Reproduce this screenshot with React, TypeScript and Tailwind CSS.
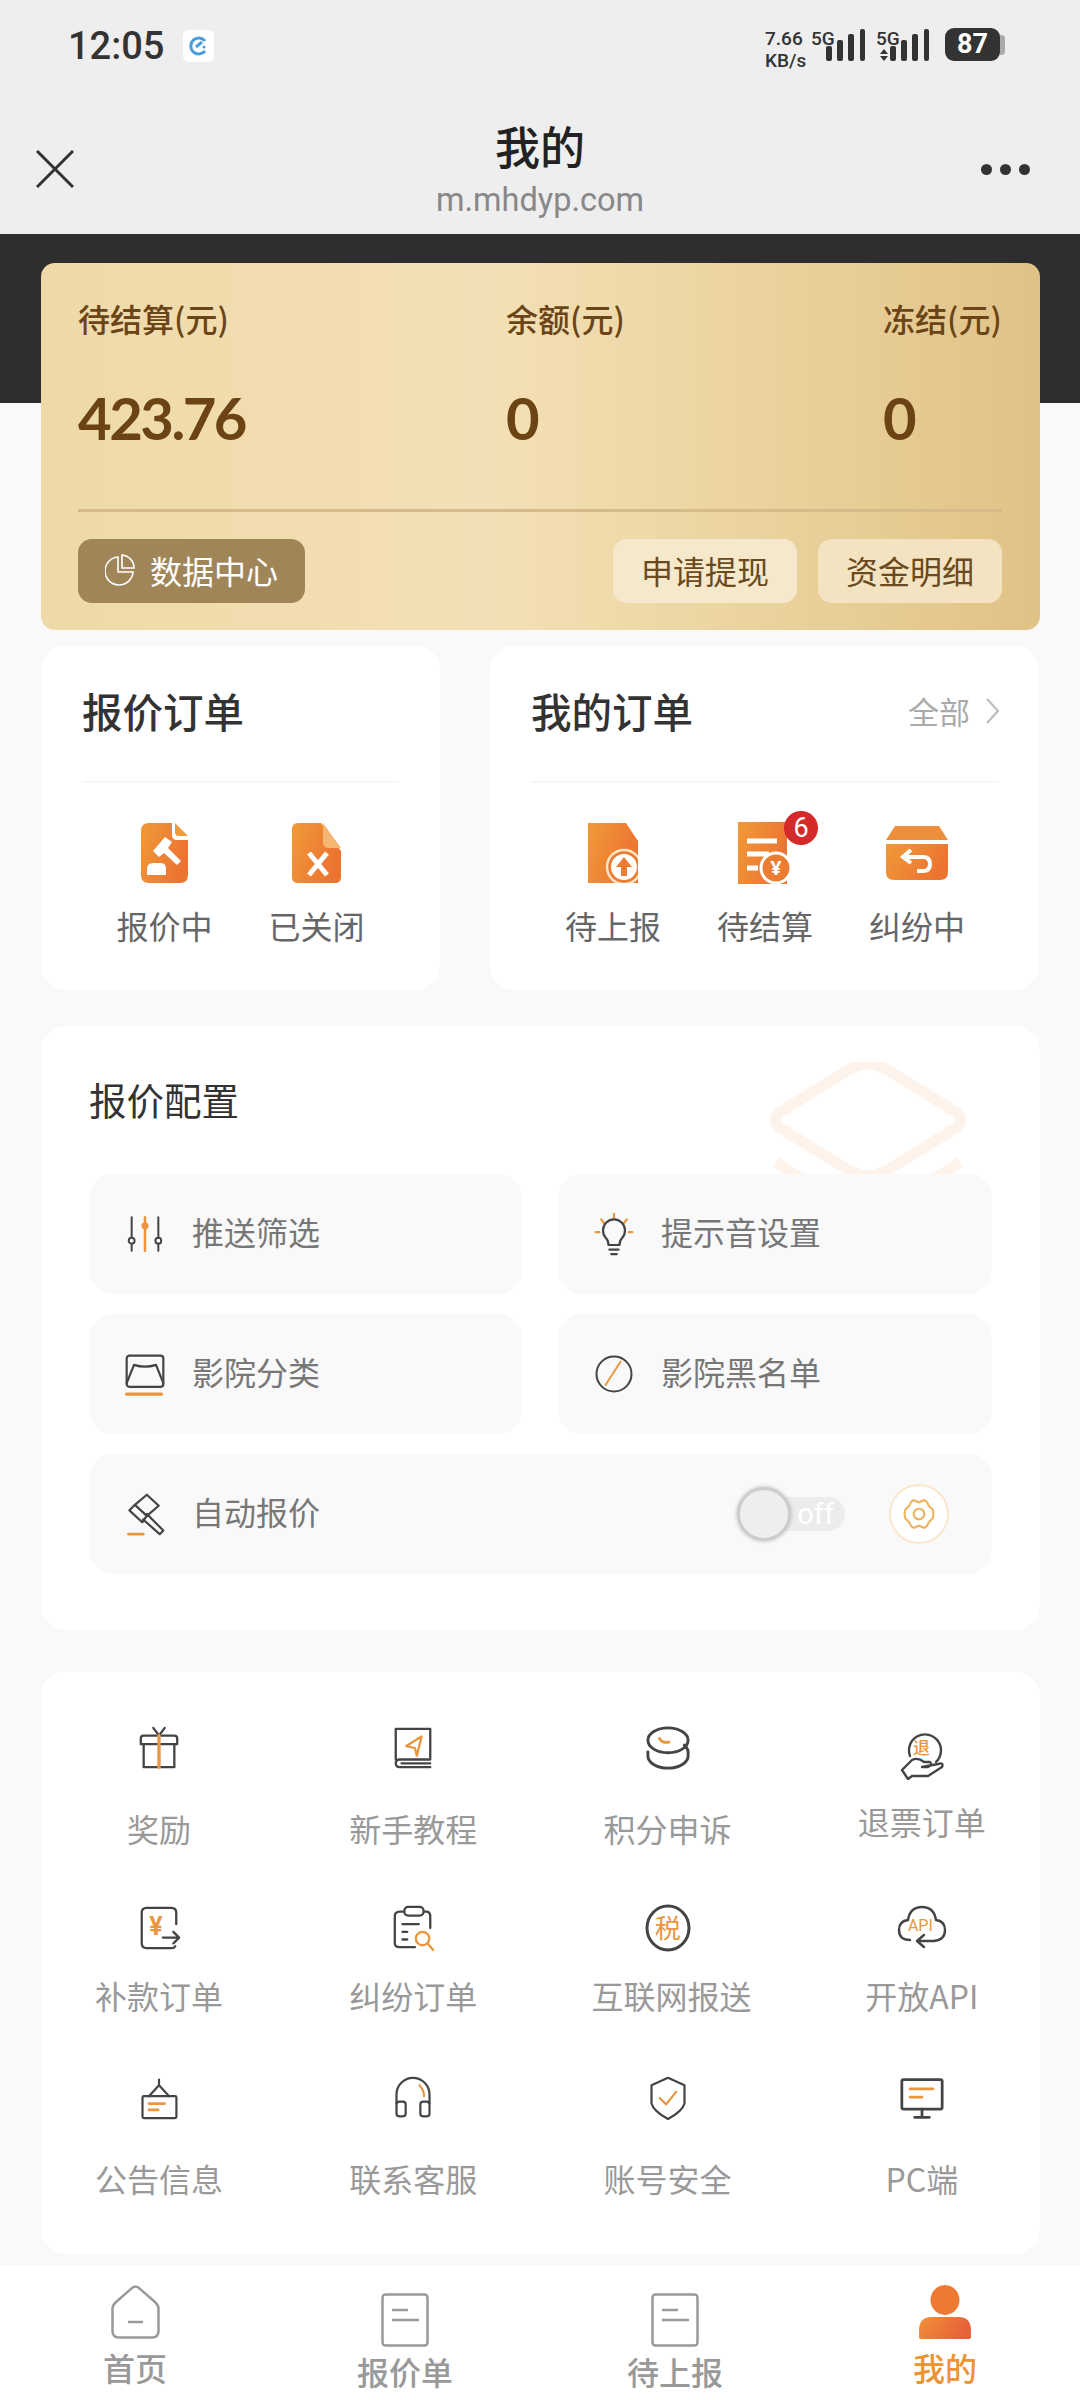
import React from "react";

const CJK = "font-['Noto_Sans_CJK_SC','Noto_Sans',sans-serif]";

const Gradient = ({ id }: { id: string }) => (
    <defs>
        <linearGradient id={id} x1="0" y1="0" x2="1" y2="0.4">
            <stop offset="0" stopColor="#f09a38" />
            <stop offset="1" stopColor="#ec7431" />
        </linearGradient>
    </defs>
);

const Bars = () => (
    <svg width="40" height="32" viewBox="0 0 40 32" fill="#333">
        <rect x="0" y="17" width="6" height="15" rx="2" />
        <rect x="11" y="11" width="6" height="21" rx="2" />
        <rect x="22" y="5" width="6" height="27" rx="2" />
        <rect x="34" y="0" width="5" height="32" rx="2" />
    </svg>
);

const StatusBar = () => (
    <div className="flex h-[90px] items-start justify-between pl-[68px] pr-[75px] pt-[28px] text-[#333]">
        <div className="flex items-center gap-[19px]">
            <span className="font-['Roboto',sans-serif] text-[38px] font-medium leading-[36px]">12:05</span>
            <div className="flex h-[32px] w-[31px] items-center justify-center rounded-[6px] bg-white">
                <svg width="20" height="20" viewBox="0 0 20 20" fill="none">
                    <path d="M16 5A8 8 0 1 0 16 15" stroke="#4b9ddb" strokeWidth="3" />
                    <path d="M7 11L13 6" stroke="#4b9ddb" strokeWidth="3" />
                    <circle cx="15" cy="11" r="1.5" fill="#4b9ddb" />
                </svg>
            </div>
        </div>
        <div className="flex items-start">
            <div className="flex w-[46px] flex-col font-['Roboto',sans-serif] text-[19px] font-medium leading-[22px]">
                <span>7.66</span>
                <span>KB/s</span>
            </div>
            <span className="w-[15px] font-['Roboto',sans-serif] text-[19px] font-medium leading-[22px]">5G</span>
            <div className="pt-[1px]"><Bars /></div>
            <div className="relative ml-[10px] w-[54px] font-['Roboto',sans-serif] text-[19px] font-medium leading-[22px]">
                <span>5G</span>
                <svg className="absolute left-[3px] top-[21px]" width="10" height="12" viewBox="0 0 10 12" fill="#333">
                    <path d="M5 0L9 5H1ZM5 12L1 7H9Z" />
                </svg>
            </div>
            <div className="-ml-[40px] mr-[15px] pt-[1px]"><Bars /></div>
            <div className="flex items-center">
                <div className="flex h-[33px] w-[55px] items-center justify-center rounded-[9px] bg-[#333] font-['Roboto',sans-serif] text-[27px] font-bold text-white">
                    87
                </div>
                <div className="h-[20px] w-[5px] rounded-r-[4px] bg-[#aaa]" />
            </div>
        </div>
    </div>
);

const TitleBar = () => (
    <div className="grid h-[144px] grid-cols-[1fr_auto_1fr] pl-[36px] pr-[50px] pt-[60px]">
        <svg width="38" height="38" viewBox="0 0 38 38" stroke="#333" strokeWidth="3" fill="none">
            <path d="M1 1L37 37M37 1L1 37" />
        </svg>
        <div className="-mt-[29px] flex translate-x-[7px] flex-col items-center">
            <span className={`${CJK} text-[45px] font-medium leading-[50px] text-[#222]`}>我的</span>
            <span className="mt-[10px] font-['Roboto',sans-serif] text-[32.5px] leading-[38px] text-[#888]">m.mhdyp.com</span>
        </div>
        <div className="flex h-[38px] items-center justify-end gap-[8px] pt-[1px]">
            <div className="h-[11px] w-[11px] rounded-full bg-[#333]" />
            <div className="h-[11px] w-[11px] rounded-full bg-[#333]" />
            <div className="h-[11px] w-[11px] rounded-full bg-[#333]" />
        </div>
    </div>
);

const Balance = ({ label, value }: { label: string; value: string }) => (
    <div className="flex flex-col">
        <span className={`${CJK} -mt-[2px] whitespace-nowrap text-[32px] font-medium leading-[40px] text-[#6b4517]`}>{label}</span>
        <span className="mt-[51px] font-['Lato',sans-serif] text-[58px] font-bold leading-[58px] tracking-[-2.5px] text-[#6b4314]">{value}</span>
    </div>
);

const GoldCard = () => (
    <div className="relative ml-[41px] mr-[40px] -mt-[140px] h-[367px] rounded-[14px] bg-[linear-gradient(90deg,#eed9a8_0%,#f4e0b6_45%,#ecd5a2_68%,#e0c286_100%)] pl-[37px] pr-[38px] pt-[37px]">
        <div className="flex">
            <div className="w-[428px]"><Balance label="待结算(元)" value="423.76" /></div>
            <div className="w-[377px]"><Balance label="余额(元)" value="0" /></div>
            <div className="w-[118px]"><Balance label="冻结(元)" value="0" /></div>
        </div>
        <div className="mt-[62px] h-[3px] bg-[#d5bb89]" />
        <div className="mt-[27px] flex items-center">
            <div className="flex h-[64px] w-[227px] items-center justify-center gap-[15px] rounded-[14px] bg-[#a08558] pb-[3px]">
                <svg width="30" height="32" viewBox="0 0 30 32" fill="none" stroke="#fff" strokeWidth="1.6">
                    <path d="M13 3A14 14 0 1 0 28 18H13Z" />
                    <path d="M17 1V14H29A13 13 0 0 0 17 1Z" />
                </svg>
                <span className={`${CJK} text-[32px] text-white`}>数据中心</span>
            </div>
            <div className={`${CJK} ml-auto flex h-[64px] w-[184px] items-center justify-center rounded-[14px] bg-[#f6e8cb] pb-[3px] text-[32px] text-[#6b4a20]`}>申请提现</div>
            <div className={`${CJK} ml-[21px] flex h-[64px] w-[184px] items-center justify-center rounded-[14px] bg-[#f3e3c0] pb-[3px] text-[32px] text-[#6b4a20]`}>资金明细</div>
        </div>
    </div>
);

const OrderItem = ({ label, children }: { label: string; children: React.ReactNode }) => (
    <div className="flex w-[152px] flex-col items-center">
        <div className="relative flex h-[64px] w-[80px] items-center justify-center">{children}</div>
        <span className={`${CJK} mt-[18px] text-[32px] leading-[44px] text-[#666]`}>{label}</span>
    </div>
);

const BidIcon = () => (
    <svg width="48" height="60" viewBox="0 0 48 60">
        <Gradient id="g1" />
        <path d="M8 0H31V12Q31 17 36 17H47V52Q47 60 39 60H8Q0 60 0 52V8Q0 0 8 0Z" fill="url(#g1)" />
        <path d="M34 0L47 13H38Q34 13 34 9Z" fill="#f09a38" />
        <path d="M24 14L31 19L27 25L40 38L36 42L23 30L18 34L12 28Z" fill="#fff" />
        <path d="M6 52V46Q6 40 12 40H20Q25 40 25 46V52Z" fill="#fff" />
    </svg>
);

const ClosedIcon = () => (
    <svg width="49" height="60" viewBox="0 0 49 60">
        <Gradient id="g2" />
        <path d="M6 0H29L49 28V54Q49 60 43 60H6Q0 60 0 54V6Q0 0 6 0Z" fill="url(#g2)" />
        <path d="M31 0L49 25H37Q31 25 31 19Z" fill="#f6b673" />
        <path d="M17 30L35 52M35 30L17 52" stroke="#fff" strokeWidth="5" />
    </svg>
);

const UploadIcon = () => (
    <svg width="50" height="60" viewBox="0 0 50 60">
        <Gradient id="g3" />
        <path d="M0 0H38L50 18V60H0Z" fill="url(#g3)" />
        <circle cx="36" cy="44" r="17" fill="#ec7c31" stroke="#fbe3c6" strokeWidth="2.5" />
        <circle cx="36" cy="44" r="13" fill="#fff" />
        <path d="M36 34L44 44H39V53H33V44H28Z" fill="#ec7c31" />
    </svg>
);

const SettleIcon = () => (
    <svg width="54" height="62" viewBox="0 0 54 62">
        <Gradient id="g4" />
        <path d="M0 0H49V62H0Z" fill="url(#g4)" />
        <path d="M9 19H39M9 32H31M9 46H20" stroke="#fff" strokeWidth="5" />
        <circle cx="38" cy="46" r="15" fill="#ec7c31" stroke="#fff" strokeWidth="3" />
        <text x="38" y="53" textAnchor="middle" fontSize="20" fill="#fff" fontWeight="700">¥</text>
    </svg>
);

const DisputeIcon = () => (
    <svg width="62" height="54" viewBox="0 0 62 54">
        <Gradient id="g5" />
        <path d="M9 0H53L62 14H0Z" fill="#ed8f3a" />
        <path d="M0 18H62V46Q62 54 54 54H8Q0 54 0 46Z" fill="url(#g5)" />
        <path d="M25 24L17 31L25 37M18 31H37Q44 31 44 38Q44 45 37 45H31" fill="none" stroke="#fff" strokeWidth="4" />
    </svg>
);

const Orders = () => (
    <div className="mt-[16px] flex h-[344px] gap-[50px] pl-[41px]">
        <div className="w-[399px] rounded-[24px] bg-white px-[41px] pt-[39px]">
            <span className={`${CJK} text-[40.5px] font-medium leading-[52px] text-[#333]`}>报价订单</span>
            <div className="mt-[44px] h-[2px] bg-[#f6f6f6]" />
            <div className="mt-[38px] flex justify-center">
                <OrderItem label="报价中"><BidIcon /></OrderItem>
                <OrderItem label="已关闭"><ClosedIcon /></OrderItem>
            </div>
        </div>
        <div className="w-[549px] rounded-[24px] bg-white pl-[41px] pr-[40px] pt-[39px]">
            <div className="flex items-center justify-between">
                <span className={`${CJK} text-[40.5px] font-medium leading-[52px] text-[#333]`}>我的订单</span>
                <div className="flex items-center gap-[16px]">
                    <span className={`${CJK} text-[31px] text-[#aaa]`}>全部</span>
                    <svg width="13" height="26" viewBox="0 0 13 26" fill="none" stroke="#bbb" strokeWidth="2">
                        <path d="M1 1L12 13L1 25" />
                    </svg>
                </div>
            </div>
            <div className="mt-[44px] h-[2px] bg-[#f6f6f6]" />
            <div className="mt-[38px] flex justify-center">
                <OrderItem label="待上报"><UploadIcon /></OrderItem>
                <OrderItem label="待结算">
                    <SettleIcon />
                    <div className="absolute -top-[10px] left-[59px] flex h-[34px] w-[34px] items-center justify-center rounded-full bg-[#d42a2a] font-['Roboto',sans-serif] text-[27px] leading-none text-white">6</div>
                </OrderItem>
                <OrderItem label="纠纷中"><DisputeIcon /></OrderItem>
            </div>
        </div>
    </div>
);

const DARK = "#444";
const ACCENT = "#e9963f";

const Svg = ({ size = 48, children }: { size?: number; children: React.ReactNode }) => (
    <svg width={size} height={size} viewBox="0 0 48 48" fill="none" stroke={DARK} strokeWidth="2.4" strokeLinecap="round" strokeLinejoin="round">
        {children}
    </svg>
);

const Tile = ({ label, icon, wide }: { label: string; icon: React.ReactNode; wide?: React.ReactNode }) => (
    <div className="flex h-[120px] items-center rounded-[24px] bg-[#f9f9f9] pl-[34px]">
        <div className="flex w-[44px] justify-center">{icon}</div>
        <span className={`${CJK} ml-[25px] pb-[6px] text-[32px] text-[#777]`}>{label}</span>
        {wide}
    </div>
);

const Config = () => (
    <div className="relative mt-[36px] ml-[41px] mr-[40px] h-[604px] overflow-hidden rounded-[24px] bg-white px-[48px] pt-[51px]">
        <svg className="absolute left-[727px] top-[36px]" width="200" height="120" viewBox="0 0 200 120" fill="none" stroke="#fdf3ea" strokeWidth="11">
            <path d="M84 6Q100 -2 116 6L188 50Q198 58 188 66L116 110Q100 118 84 110L12 66Q2 58 12 50Z" />
            <path d="M8 100L50 128M192 100L150 128" />
        </svg>
        <div className={`${CJK} relative text-[37.5px] leading-[44px] text-[#333]`}>报价配置</div>
        <div className="relative mt-[53px] grid grid-cols-[433px_434px] gap-x-[36px] gap-y-[20px]">
            <Tile label="推送筛选" icon={
                <Svg size={40}>
                    <path d="M8 4V44M40 4V44" />
                    <path d="M24 4V44" stroke={ACCENT} strokeWidth="3" />
                    <circle cx="8" cy="32" r="3.5" fill="#fff" />
                    <circle cx="40" cy="32" r="3.5" fill="#fff" />
                    <circle cx="24" cy="14" r="3" fill={ACCENT} stroke={ACCENT} />
                </Svg>
            } />
            <Tile label="提示音设置" icon={
                <Svg size={44}>
                    <path d="M24 2V7M10 8L13 12M38 8L35 12M4 22H8M40 22H44" stroke={ACCENT} />
                    <path d="M18 36Q18 31 15 28A12 12 0 1 1 33 28Q30 31 30 36Z" />
                    <path d="M19 41H29M21 46H27" />
                </Svg>
            } />
            <Tile label="影院分类" icon={
                <Svg size={44}>
                    <rect x="4" y="4" width="40" height="34" rx="3" />
                    <path d="M4 34L12 14Q24 18 36 14L44 34" />
                    <path d="M4 46H42" stroke={ACCENT} strokeWidth="3.5" />
                </Svg>
            } />
            <Tile label="影院黑名单" icon={
                <Svg size={40}>
                    <circle cx="24" cy="24" r="21" />
                    <path d="M14 37L32 9" stroke={ACCENT} />
                </Svg>
            } />
            <div className="col-span-2">
                <Tile label="自动报价" icon={
                    <Svg size={44}>
                        <path d="M26 3L39 15L26 26L13 14Z" />
                        <path d="M13 14L7 20L21 33L26 26" />
                        <path d="M26 24L44 42L40 46L22 30" />
                        <path d="M6 46H22" stroke={ACCENT} strokeWidth="3" />
                    </Svg>
                } wide={
                    <div className="ml-auto flex items-center pr-[43px]">
                        <div className="relative flex h-[34px] w-[105px] items-center justify-end rounded-full bg-[#ececec] pr-[11px]">
                            <span className="font-['Roboto',sans-serif] text-[29px] leading-none text-white">off</span>
                            <div className="absolute -left-[3px] -top-[10px] h-[54px] w-[54px] rounded-full border-[3px] border-[#ccc] bg-[#eee] shadow-[0_0_4px_#bbb]" />
                        </div>
                        <div className="ml-[44px] flex h-[60px] w-[60px] items-center justify-center rounded-full border-[2px] border-[#fbe7cb] bg-white">
                            <svg width="34" height="34" viewBox="0 0 32 32" fill="none" stroke="#eeb35e" strokeWidth="2">
                                <path d="M11 3L16 5L21 3Q24 4 25 8L29 12Q30 16 29 20L25 24Q24 28 21 29L16 27L11 29Q8 28 7 24L3 20Q2 16 3 12L7 8Q8 4 11 3Z" />
                                <circle cx="16" cy="16" r="5" />
                            </svg>
                        </div>
                    </div>
                } />
            </div>
        </div>
    </div>
);

const GridItem = ({ label, icon, className }: { label: string; icon: React.ReactNode; className: string }) => (
    <div className={`flex flex-col items-center ${className}`}>
        <div className="flex h-[56px] items-center justify-center">{icon}</div>
        <span className={`${CJK} text-[32px] leading-[44px] text-[#999]`}>{label}</span>
    </div>
);

const MenuGrid = () => (
    <div className="ml-[41px] mr-[40px] mt-[42px] h-[582px] rounded-[24px] bg-white pt-[48px]">
        <div className="-mx-[9px] grid grid-cols-4">
            <GridItem label="奖励" className="gap-[30px]" icon={
                <Svg size={46}>
                    <path d="M5 20V14Q5 11 8 11H40Q43 11 43 14V20M8 20V44H40V20M5 20H43" />
                    <path d="M18 3L24 11L30 3" />
                    <path d="M24 11V44" stroke={ACCENT} strokeWidth="3.5" />
                </Svg>
            } />
            <GridItem label="新手教程" className="gap-[30px]" icon={
                <Svg size={46}>
                    <path d="M6 36V4H42V36H10Q6 36 6 40Q6 44 10 44H42M12 40H42" />
                    <path d="M33 12L17 22L26 24L28 32Z" stroke={ACCENT} />
                </Svg>
            } />
            <GridItem label="积分申诉" className="gap-[30px]" icon={
                <Svg size={46}>
                    <ellipse cx="24" cy="16" rx="21" ry="13" strokeWidth="3" />
                    <path d="M3 28V32C3 39 12 45 24 45S45 39 45 32V28C45 25 43 23 41 21" strokeWidth="3" />
                    <path d="M15 14Q18 19 25 18" stroke={ACCENT} strokeWidth="3" />
                </Svg>
            } />
            <GridItem label="退票订单" className="gap-[15px] pt-[8px]" icon={
                <div className="relative h-[48px] w-[48px]">
                    <Svg size={48}>
                        <path d="M12 24A16 16 0 1 1 38 30" />
                        <path d="M4 38L14 28Q20 25 26 30H32Q35 33 30 35H24L40 32Q46 30 44 35L30 44H14L10 47Z" />
                    </Svg>
                    <span className={`${CJK} absolute left-[15px] top-[2px] text-[17px] font-medium text-[#e9963f]`}>退</span>
                </div>
            } />
        </div>
        <div className="-mx-[9px] mt-[50px] grid grid-cols-4">
            <GridItem label="补款订单" className="gap-[17px]" icon={
                <div className="relative h-[46px] w-[46px]">
                    <Svg size={46}>
                        <path d="M42 20V8Q42 3 37 3H11Q6 3 6 8V40Q6 45 11 45H37Q40 45 41 43" />
                        <path d="M28 34H44M39 28L45 34L39 40" />
                    </Svg>
                    <span className="absolute left-[13px] top-[3px] font-['Roboto',sans-serif] text-[25px] font-bold text-[#e9963f]">¥</span>
                </div>
            } />
            <GridItem label="纠纷订单" className="gap-[17px]" icon={
                <Svg size={46}>
                    <path d="M14 7H10Q5 7 5 12V40Q5 44 10 44H26M36 7H38Q42 7 42 12V24" />
                    <rect x="15" y="2" width="20" height="9" rx="4" />
                    <path d="M13 20H30M13 28H18M13 36H18" />
                    <circle cx="34" cy="35" r="7" stroke={ACCENT} />
                    <path d="M39 40L45 47" stroke={ACCENT} />
                </Svg>
            } />
            <GridItem label="互联网报送" className="gap-[17px] pl-[8px]" icon={
                <div className="relative -ml-[8px] h-[48px] w-[48px]">
                    <Svg size={48}>
                        <ellipse cx="24" cy="24" rx="21" ry="22" strokeWidth="3" />
                    </Svg>
                    <span className={`${CJK} absolute left-[11px] top-[0px] text-[26px] leading-[46px] text-[#e9963f]`}>税</span>
                </div>
            } />
            <GridItem label="开放API" className="gap-[17px]" icon={
                <div className="relative h-[48px] w-[52px]">
                    <svg width="52" height="48" viewBox="0 0 52 48" fill="none" stroke={DARK} strokeWidth="2.4" strokeLinecap="round" strokeLinejoin="round">
                        <path d="M14 36Q3 36 3 26Q3 17 12 16Q14 3 26 3Q38 3 40 16Q49 17 49 26Q49 36 38 37" />
                        <path d="M38 37H22M28 31L21 37L28 43" />
                    </svg>
                    <span className="absolute left-[12px] top-[14px] font-['Roboto',sans-serif] text-[16px] leading-none text-[#e9963f]">API</span>
                </div>
            } />
        </div>
        <div className="-mx-[9px] mt-[53px] grid grid-cols-4">
            <GridItem label="公告信息" className="gap-[30px]" icon={
                <Svg size={44}>
                    <path d="M24 4V10M24 10L13 22M24 10L35 22" />
                    <rect x="6" y="22" width="37" height="24" rx="1.5" />
                    <path d="M13 30H30M13 37H23" stroke={ACCENT} strokeWidth="3" />
                </Svg>
            } />
            <GridItem label="联系客服" className="gap-[30px]" icon={
                <Svg size={44}>
                    <path d="M6 30V20A18 18 0 0 1 42 20V30" />
                    <rect x="6" y="28" width="10" height="16" rx="3" />
                    <rect x="32" y="28" width="10" height="16" rx="3" />
                    <path d="M31 10Q36 15 36 22" stroke={ACCENT} />
                </Svg>
            } />
            <GridItem label="账号安全" className="gap-[30px]" icon={
                <Svg size={44}>
                    <path d="M24 2L42 10V30Q40 38 24 47Q8 38 6 30V10Z" />
                    <path d="M15 24L22 31L33 17" stroke={ACCENT} />
                </Svg>
            } />
            <GridItem label="PC端" className="gap-[30px]" icon={
                <Svg size={44}>
                    <rect x="2" y="4" width="44" height="32" rx="2" strokeWidth="3" />
                    <path d="M24 36V44M16 45H32" strokeWidth="3" />
                    <path d="M11 14H36M11 23H24" stroke={ACCENT} strokeWidth="3" />
                </Svg>
            } />
        </div>
    </div>
);

const NavItem = ({ label, icon, active, className }: { label: string; icon: React.ReactNode; active?: boolean; className: string }) => (
    <div className={`flex flex-col items-center ${className}`}>
        <div className="flex justify-center">{icon}</div>
        <span className={`${CJK} text-[32px] font-medium leading-[40px] ${active ? "text-[#ec9332]" : "text-[#999]"}`}>{label}</span>
    </div>
);

const DocIcon = () => (
    <svg width="48" height="54" viewBox="0 0 48 54" fill="none" stroke="#999" strokeWidth="2.5">
        <rect x="1.5" y="1.5" width="45" height="51" rx="3" />
        <path d="M11 17H27M11 27H38" />
    </svg>
);

const BottomNav = () => (
    <div className="mt-[11px] grid h-[135px] grid-cols-4 bg-white">
        <NavItem label="首页" className="gap-[8px] pt-[20px]" icon={
            <svg width="49" height="54" viewBox="0 0 49 54" fill="none" stroke="#999" strokeWidth="2.5">
                <path d="M24.5 1.5Q27 1.5 29 4L44 17Q47.5 20 47.5 24V46Q47.5 52.5 41 52.5H8Q1.5 52.5 1.5 46V24Q1.5 20 5 17L20 4Q22 1.5 24.5 1.5Z" />
                <path d="M17 37H32" />
            </svg>
        } />
        <NavItem label="报价单" className="gap-[4px] pt-[28px]" icon={<DocIcon />} />
        <NavItem label="待上报" className="gap-[4px] pt-[28px]" icon={<DocIcon />} />
        <NavItem label="我的" active className="gap-[8px] pt-[20px]" icon={
            <svg width="52" height="54" viewBox="0 0 52 54">
                <defs>
                    <linearGradient id="g6" x1="0" y1="0" x2="1" y2="0.3">
                        <stop offset="0" stopColor="#ef9236" />
                        <stop offset="1" stopColor="#e8603a" />
                    </linearGradient>
                </defs>
                <ellipse cx="26" cy="15" rx="14.5" ry="15" fill="#ec7a32" />
                <path d="M0 46Q0 32 12 32H40Q52 32 52 46V52Q52 54 50 54H2Q0 54 0 52Z" fill="url(#g6)" />
            </svg>
        } />
    </div>
);

export default function App() {
    return (
        <div className="flex h-[2400px] w-[1080px] flex-col overflow-hidden bg-[#f9f9f9]">
            <div className="h-[234px] bg-[#eeeeee]">
                <StatusBar />
                <TitleBar />
            </div>
            <div className="h-[169px] bg-[#2e2e2e]" />
            <GoldCard />
            <Orders />
            <Config />
            <MenuGrid />
            <BottomNav />
        </div>
    );
}
